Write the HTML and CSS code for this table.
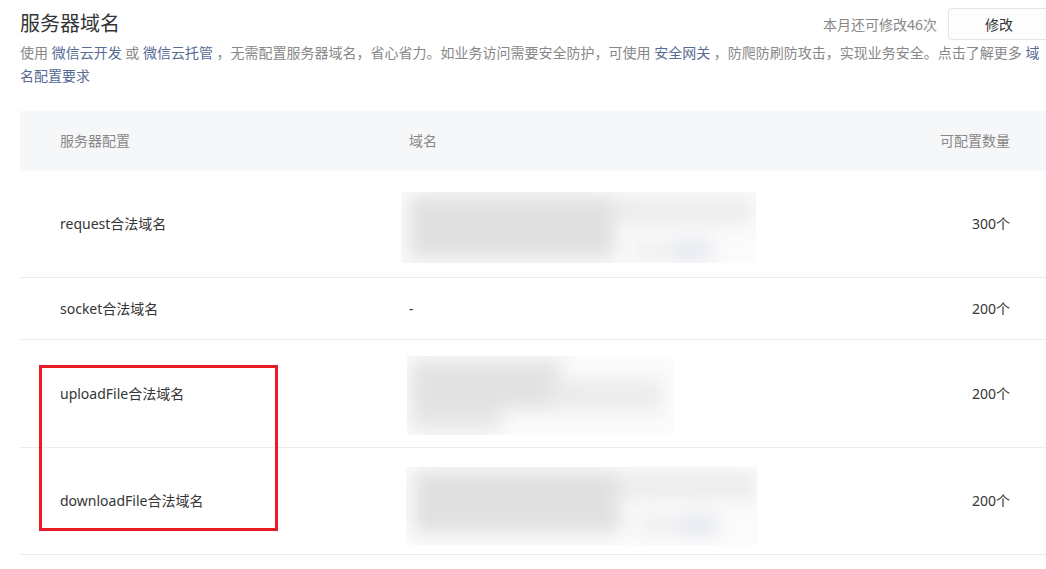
FILE: index.html
```html
<!DOCTYPE html>
<html lang="zh-CN">
<head>
<meta charset="utf-8">
<title>服务器域名</title>
<link rel="stylesheet" href="styles.css">
</head>
<body>
<div class="page">
  <div class="topbar">
    <h1 class="title">服务器域名</h1>
    <div class="actions">
      <span class="quota">本月还可修改46次</span>
      <button class="btn">修改</button>
    </div>
  </div>
  <p class="desc">使用 <a class="link">微信云开发</a> 或 <a class="link">微信云托管</a> ，无需配置服务器域名，省心省力。如业务访问需要安全防护，可使用 <a class="link">安全网关</a> ，防爬防刷防攻击，实现业务安全。点击了解更多 <a class="link">域名配置要求</a></p>

  <div class="table">
    <div class="row head">
      <div class="cell c1">服务器配置</div>
      <div class="cell c2">域名</div>
      <div class="cell c3">可配置数量</div>
    </div>
    <div class="row">
      <div class="cell c1">request合法域名</div>
      <div class="cell c2">
        <div class="shot shot-a"><div class="blur"></div></div>
      </div>
      <div class="cell c3">300个</div>
    </div>
    <div class="row short">
      <div class="cell c1">socket合法域名</div>
      <div class="cell c2">-</div>
      <div class="cell c3">200个</div>
    </div>
    <div class="row">
      <div class="cell c1">uploadFile合法域名</div>
      <div class="cell c2">
        <div class="shot shot-b"><div class="blur"></div></div>
      </div>
      <div class="cell c3">200个</div>
    </div>
    <div class="row">
      <div class="cell c1">downloadFile合法域名</div>
      <div class="cell c2">
        <div class="shot shot-c"><div class="blur"></div></div>
      </div>
      <div class="cell c3">200个</div>
    </div>
  </div>
  <div class="mark"></div>
</div>
</body>
</html>
```

FILE: styles.css
```css
html, body {
  margin: 0;
  padding: 0;
  overflow: hidden;
  background: #fff;
}

body {
  font-family: "Noto Sans", "Noto Sans CJK SC", sans-serif;
  font-size: 14px;
  color: #353535;
}

.page {
  position: relative;
  width: 1030px;
  padding: 8px 0 0 20px;
}

.topbar {
  display: flex;
  align-items: center;
  justify-content: space-between;
  height: 32px;
}

.title {
  margin: 0;
  font-size: 20px;
  font-weight: 400;
  line-height: 32px;
  color: #353535;
}

.actions {
  display: flex;
  align-items: center;
  gap: 11px;
}

.quota {
  color: #888;
  font-size: 14px;
}

.btn {
  width: 102px;
  height: 32px;
  border: 1px solid #e4e4e4;
  border-radius: 3px;
  background: #fdfdfd;
  font-family: inherit;
  font-size: 14px;
  color: #353535;
  padding: 0;
}

.desc {
  margin: 1px 0 0;
  font-size: 14px;
  line-height: 23px;
  color: #888;
}

.link {
  color: #576b95;
  text-decoration: none;
}

.table {
  margin-top: 24px;
}

.row {
  display: grid;
  grid-template-columns: 349px 1fr 160px;
  align-items: center;
  border-bottom: 1px solid #ececec;
}

.row.head {
  height: 60px;
  background: #f6f7f9;
  border-bottom: 0;
  color: #888;
}

.row.short {
  height: 61px;
}

.cell {
  line-height: 20px;
}

.c1, .c2 {
  padding-left: 40px;
}

.c3 {
  text-align: right;
  padding-right: 40px;
}

.shot {
  position: relative;
  overflow: hidden;
  background: #fbfbfb;
}

.blur {
  position: absolute;
  inset: -6px;
  filter: blur(9px);
  background-repeat: no-repeat;
}

.shot-a {
  width: 355px;
  height: 71px;
  margin: 21px 0 14px -8px;
}

.shot-a .blur,
.shot-c .blur {
  background-image:
    linear-gradient(#dfe3ee, #dfe3ee),
    linear-gradient(#eeeeee, #eeeeee),
    linear-gradient(#ebebeb, #ebebeb),
    linear-gradient(#e0e0e0, #e0e0e0);
  background-position: 280px 56px, 236px 56px, 216px 12px, 14px 10px;
  background-size: 36px 16px, 50px 16px, 140px 26px, 206px 62px;
}

.shot-b {
  width: 266px;
  height: 79px;
  margin: 16px 0 12px -2px;
}

.shot-b .blur {
  background-image:
    linear-gradient(#eaeaea, #eaeaea),
    linear-gradient(#e2e2e2, #e2e2e2),
    linear-gradient(#e6e6e6, #e6e6e6);
  background-position: 150px 30px, 10px 10px, 10px 58px;
  background-size: 110px 30px, 150px 50px, 90px 22px;
}

.shot-c {
  width: 351px;
  height: 78px;
  margin: 19px 0 9px -3px;
}

.mark {
  position: absolute;
  left: 39px;
  top: 365px;
  width: 233px;
  height: 160px;
  border: 3px solid #e81c24;
}
```
